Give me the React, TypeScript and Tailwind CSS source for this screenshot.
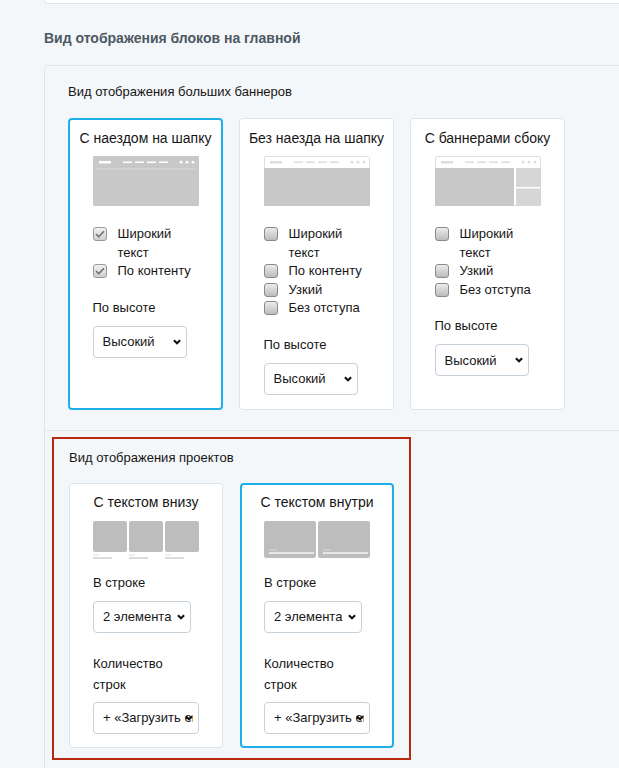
import React from "react";

type CheckItem = { label: string; checked?: boolean };

const Checkbox = ({ checked }: { checked?: boolean }) => (
  <span
    className={
      checked
        ? "mt-[2px] flex h-[14px] w-[14px] shrink-0 items-center justify-center rounded-[3px] border border-[#9a9a9a] bg-linear-to-b from-[#f1f1f1] to-[#cfcfcf]"
        : "mt-[2px] flex h-[14px] w-[14px] shrink-0 items-center justify-center rounded-[3px] border border-[#8a8a8a] bg-linear-to-b from-[#ececec] to-[#bcbcbc]"
    }
  >
    {checked && (
      <svg width="10" height="8" viewBox="0 0 10 8" fill="none">
        <path d="M1 4l2.7 2.7L9 1.2" stroke="#6e6e6e" strokeWidth="1.6" />
      </svg>
    )}
  </span>
);

const Chevron = () => (
  <svg
    className="absolute right-[5px] top-1/2 -translate-y-1/2"
    width="8"
    height="6"
    viewBox="0 0 8 6"
    fill="none"
  >
    <path d="M0.9 1.2L4 4.3l3.1-3.1" stroke="#111" strokeWidth="2" />
  </svg>
);

const Select = ({ value, width }: { value: string; width: string }) => (
  <div
    className={`relative flex h-[32px] items-center rounded-[4px] border border-[#c6d1d9] bg-white pl-[9px] pr-[5px] text-[13px] ${width}`}
  >
    <span className="min-w-0 flex-1 overflow-hidden whitespace-nowrap">{value}</span>
    <Chevron />
  </div>
);

// header strip used by the banner previews
const ThumbHeader = ({ color }: { color: string }) => (
  <g fill={color}>
    <rect x="6" y="5" width="12" height="2.5" />
    <rect x="30" y="5.5" width="9" height="1.5" />
    <rect x="42" y="5.5" width="9" height="1.5" />
    <rect x="54" y="5.5" width="9" height="1.5" />
    <rect x="66" y="5.5" width="9" height="1.5" />
    <circle cx="88" cy="6.2" r="1.4" />
    <circle cx="94" cy="6.2" r="1.4" />
    <circle cx="100" cy="6.2" r="1.4" />
  </g>
);

const BannerOverlay = () => (
  <svg width="106" height="50" viewBox="0 0 106 50">
    <rect width="106" height="50" rx="1" fill="#c8c8c8" />
    <ThumbHeader color="#ffffff" />
    <rect x="3" y="12.5" width="100" height="1" fill="#d9d9d9" />
  </svg>
);

const BannerPlain = () => (
  <svg width="106" height="50" viewBox="0 0 106 50">
    <rect x="0.5" y="0.5" width="105" height="49" rx="1" fill="#fff" stroke="#dddddd" />
    <ThumbHeader color="#dddddd" />
    <rect x="0" y="12" width="106" height="38" fill="#c8c8c8" />
  </svg>
);

const BannerSide = () => (
  <svg width="106" height="50" viewBox="0 0 106 50">
    <rect x="0.5" y="0.5" width="105" height="49" rx="1" fill="#fff" stroke="#dddddd" />
    <ThumbHeader color="#dddddd" />
    <rect x="0" y="12" width="79" height="38" fill="#c8c8c8" />
    <rect x="81" y="12" width="25" height="19" fill="#d6d6d6" />
    <rect x="81" y="32.5" width="25" height="17.5" fill="#d6d6d6" />
  </svg>
);

const ProjectsBelow = () => (
  <svg width="106" height="38" viewBox="0 0 106 38">
    {[0, 36, 72].map((x) => (
      <g key={x}>
        <rect x={x} y="0" width="34" height="31" rx="2" fill="#bdbdbd" />
        <rect x={x} y="33.5" width="6" height="1" fill="#dddddd" />
        <rect x={x} y="36.3" width="19" height="1.5" fill="#d0d0d0" />
      </g>
    ))}
  </svg>
);

const ProjectsInside = () => (
  <svg width="106" height="37" viewBox="0 0 106 37">
    {[0, 54].map((x) => (
      <g key={x}>
        <rect x={x} y="0" width="52" height="37" rx="2" fill="#bdbdbd" />
        <rect x={x + 5} y="28.5" width="8" height="1" fill="#d9d9d9" />
        <rect x={x + 5} y="31.3" width="45" height="1.5" fill="#f5f5f5" />
      </g>
    ))}
  </svg>
);

const BannerCard = ({
  title,
  active,
  thumb,
  items,
}: {
  title: string;
  active?: boolean;
  thumb: React.ReactNode;
  items: CheckItem[];
}) => (
  <div
    className={
      active
        ? "w-[155px] rounded-[4px] border-2 border-[#1eaee8] bg-white pb-[13px] pt-[9px]"
        : "w-[155px] rounded-[4px] border border-[#dce4ea] bg-white pb-[14px] pt-[10px]"
    }
  >
    <div className="whitespace-nowrap text-center text-[14px] leading-[18px]">{title}</div>
    <div className="mx-auto w-[106px]">
      <div className="mt-[9px]">{thumb}</div>
      <div className="mt-[19px] flex flex-col">
        {items.map((it) => (
          <label key={it.label} className="flex items-start gap-[11px] text-[13px] leading-[18.6px]">
            <Checkbox checked={it.checked} />
            <span>{it.label}</span>
          </label>
        ))}
      </div>
      <div className="mt-[17px] text-[13px] leading-[20px]">По высоте</div>
      <div className="mt-[8px]">
        <Select value="Высокий" width="w-[94px]" />
      </div>
    </div>
  </div>
);

const ProjectCard = ({
  title,
  active,
  thumb,
  firstWidth,
}: {
  title: string;
  active?: boolean;
  thumb: React.ReactNode;
  firstWidth: string;
}) => (
  <div
    className={
      active
        ? "w-[154px] rounded-[4px] border-2 border-[#1eaee8] bg-white pb-[12px] pt-[8px]"
        : "w-[154px] rounded-[4px] border border-[#dce4ea] bg-white pb-[13px] pt-[9px]"
    }
  >
    <div className="whitespace-nowrap text-center text-[14px] leading-[18px]">{title}</div>
    <div className="mx-auto w-[106px]">
      <div className="mt-[10px] h-[38px]">{thumb}</div>
      <div className="mt-[14px] text-[13px] leading-[20px]">В строке</div>
      <div className="mt-[8px]">
        <Select value="2 элемента" width={firstWidth} />
      </div>
      <div className="mt-[20px] text-[13px] leading-[21px]">Количество строк</div>
      <div className="mt-[7px]">
        <Select value="+ «Загрузить ещё»" width="w-[106px]" />
      </div>
    </div>
  </div>
);

export default function App() {
  return (
    <div className="min-h-[768px] w-[619px] overflow-hidden bg-[#f4f7f9] font-['Liberation_Sans',Arial,sans-serif] text-[#161616]">
      <div className="ml-[44px] h-[4px] w-[700px] rounded-bl-[4px] border-b border-l border-[#dfe6eb] bg-white" />

      <h2 className="ml-[44px] mt-[24px] text-[14px] font-bold leading-[20px] text-[#4c5862]">
        Вид отображения блоков на главной
      </h2>

      <div className="ml-[44px] mt-[17px] w-[700px] rounded-tl-[4px] border border-[#dfe6eb]">
        <section className="pb-[20px] pl-[23px] pt-[16px]">
          <div className="text-[13px] leading-[20px]">Вид отображения больших баннеров</div>
          <div className="mt-[16px] flex items-stretch gap-[16px]">
            <BannerCard
              title="С наездом на шапку"
              active
              thumb={<BannerOverlay />}
              items={[
                { label: "Широкий текст", checked: true },
                { label: "По контенту", checked: true },
              ]}
            />
            <BannerCard
              title="Без наезда на шапку"
              thumb={<BannerPlain />}
              items={[
                { label: "Широкий текст" },
                { label: "По контенту" },
                { label: "Узкий" },
                { label: "Без отступа" },
              ]}
            />
            <BannerCard
              title="С баннерами сбоку"
              thumb={<BannerSide />}
              items={[{ label: "Широкий текст" }, { label: "Узкий" }, { label: "Без отступа" }]}
            />
          </div>
        </section>

        <section className="border-t border-[#dfe6eb] px-[7px] pb-[20px] pt-[6px]">
          <div className="w-[359px] border-2 border-[#b8290f] px-[15px] pb-[10px] pt-[9px]">
            <div className="text-[13px] leading-[20px]">Вид отображения проектов</div>
            <div className="mt-[15px] flex gap-[17px]">
              <ProjectCard title="С текстом внизу" thumb={<ProjectsBelow />} firstWidth="w-[98px]" />
              <ProjectCard
                title="С текстом внутри"
                active
                thumb={<ProjectsInside />}
                firstWidth="w-[98px]"
              />
            </div>
          </div>
        </section>
      </div>
    </div>
  );
}
